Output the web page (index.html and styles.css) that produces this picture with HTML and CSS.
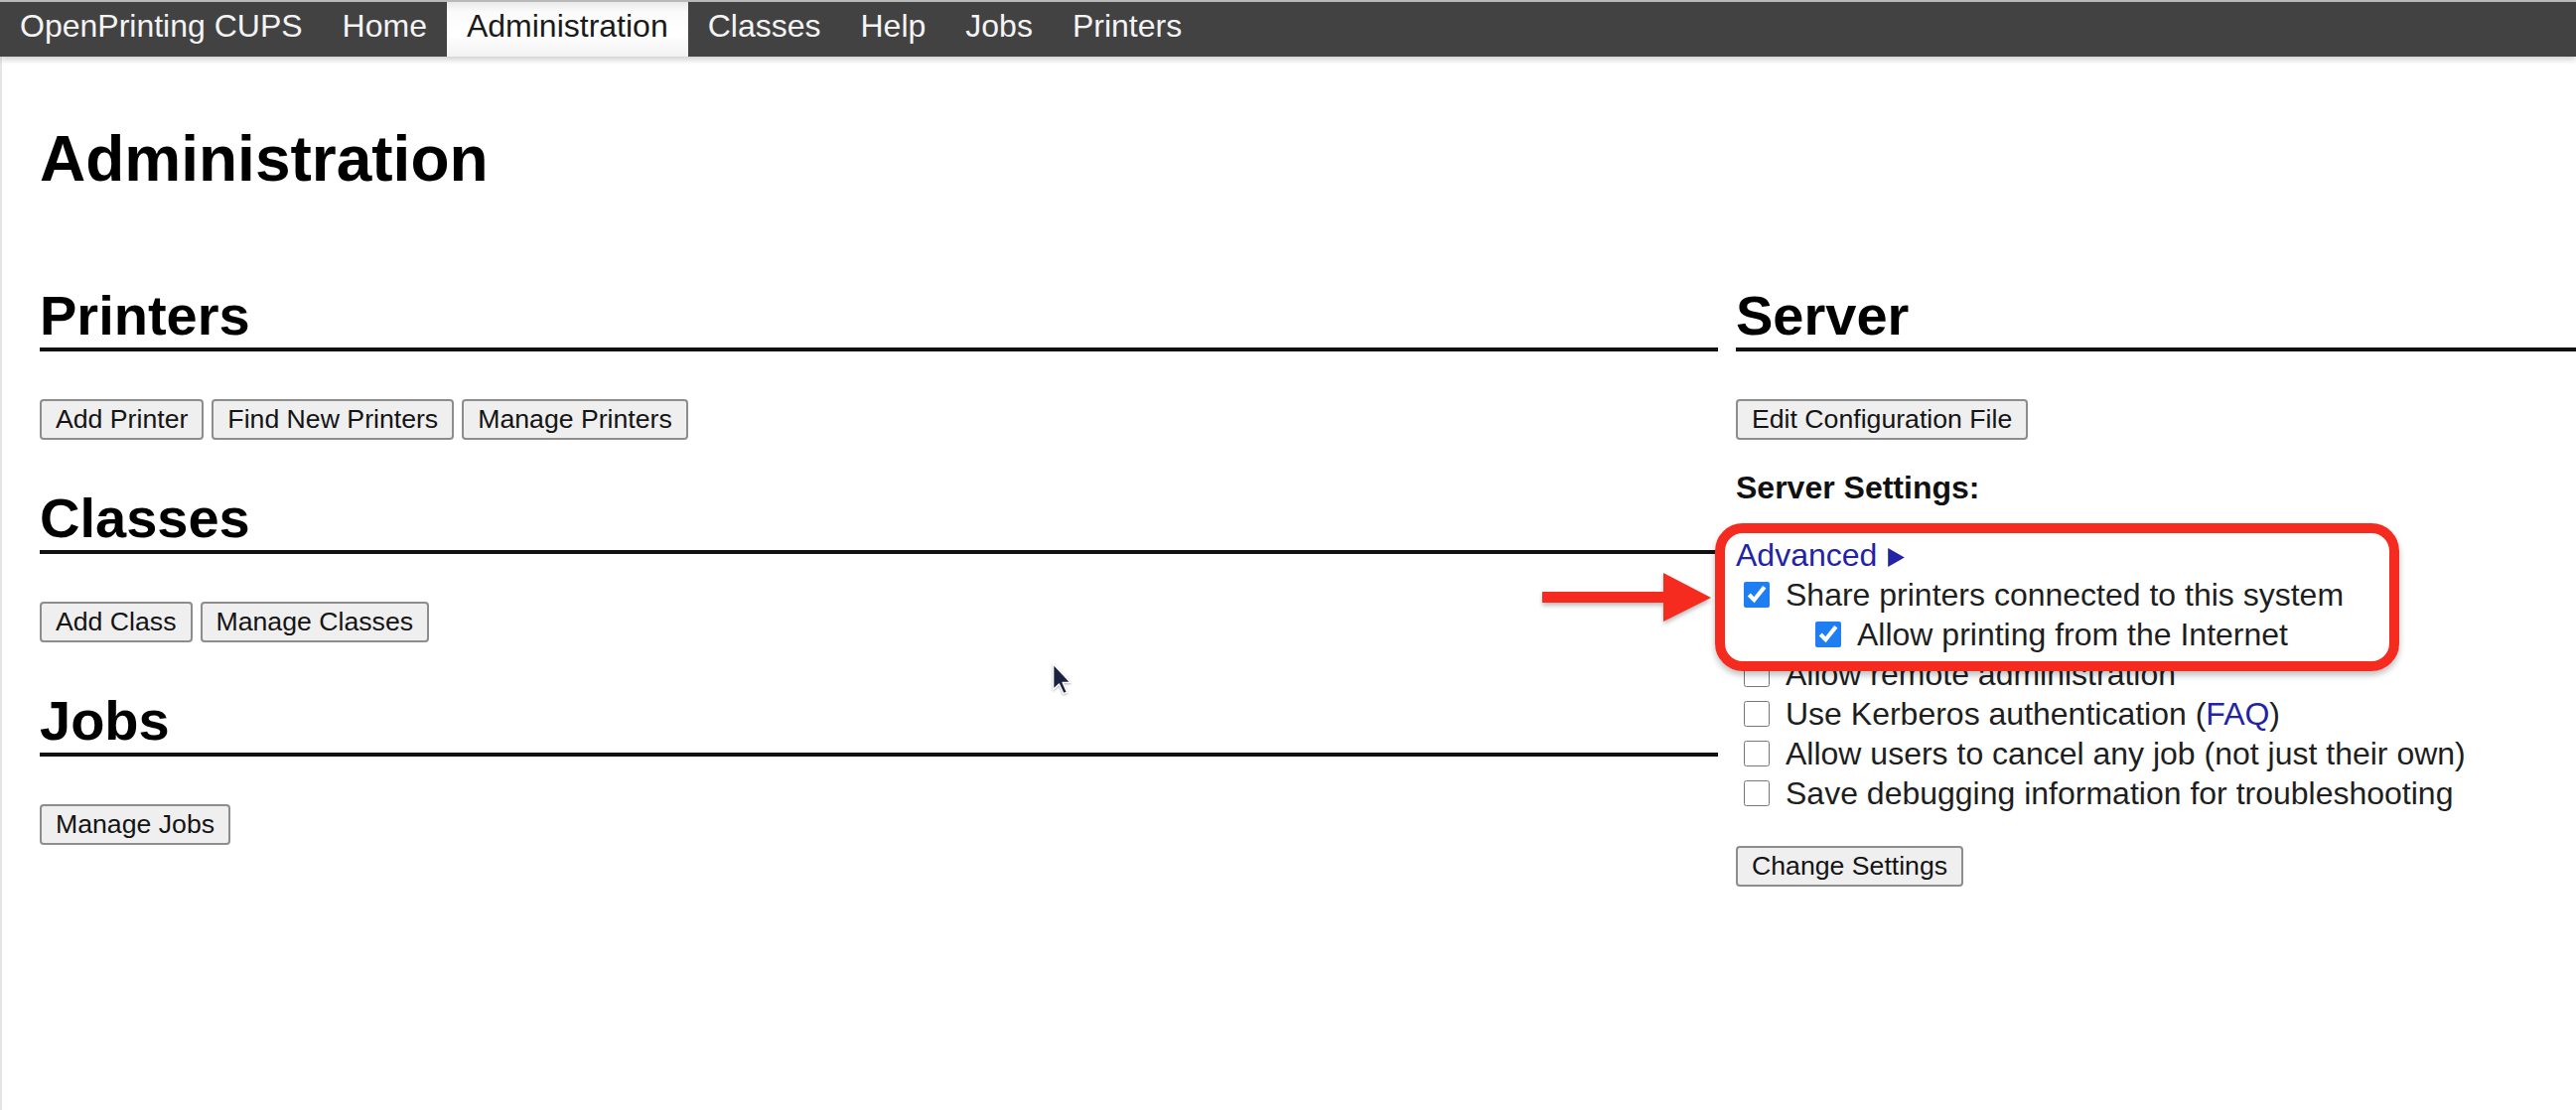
FILE: index.html
```html
<!DOCTYPE html>
<html lang="en">
<head>
<meta charset="utf-8">
<title>Administration - CUPS</title>
<link rel="stylesheet" href="styles.css">
</head>
<body>
<header class="nav">
  <a class="nav-item" href="#">OpenPrinting CUPS</a>
  <a class="nav-item" href="#">Home</a>
  <a class="nav-item active" href="#">Administration</a>
  <a class="nav-item" href="#">Classes</a>
  <a class="nav-item" href="#">Help</a>
  <a class="nav-item" href="#">Jobs</a>
  <a class="nav-item" href="#">Printers</a>
</header>

<main class="page">
  <h1 class="title">Administration</h1>
  <div class="cols">
    <div class="col">
      <section class="section">
        <h2 class="heading">Printers</h2>
        <div class="btn-row">
          <button class="btn">Add Printer</button>
          <button class="btn">Find New Printers</button>
          <button class="btn">Manage Printers</button>
        </div>
      </section>
      <section class="section">
        <h2 class="heading">Classes</h2>
        <div class="btn-row">
          <button class="btn">Add Class</button>
          <button class="btn">Manage Classes</button>
        </div>
      </section>
      <section class="section">
        <h2 class="heading">Jobs</h2>
        <div class="btn-row">
          <button class="btn">Manage Jobs</button>
        </div>
      </section>
    </div>

    <div class="col">
      <section class="section">
        <h2 class="heading">Server</h2>
        <div class="btn-row">
          <button class="btn">Edit Configuration File</button>
        </div>
        <p class="settings-title">Server Settings:</p>
        <div class="settings">
          <div class="adv-row"><a class="link" href="#">Advanced</a><svg class="tri" viewBox="0 0 16 16" width="16" height="16"><path d="M1 0 L15 8 L1 16 Z"/></svg></div>
          <label class="cb-row"><input type="checkbox" class="cb" checked><span class="cb-text">Share printers connected to this system</span></label>
          <label class="cb-row sub"><input type="checkbox" class="cb" checked><span class="cb-text">Allow printing from the Internet</span></label>
          <label class="cb-row"><input type="checkbox" class="cb"><span class="cb-text">Allow remote administration</span></label>
          <label class="cb-row"><input type="checkbox" class="cb"><span class="cb-text">Use Kerberos authentication (<a class="link" href="#">FAQ</a>)</span></label>
          <label class="cb-row"><input type="checkbox" class="cb"><span class="cb-text">Allow users to cancel any job (not just their own)</span></label>
          <label class="cb-row"><input type="checkbox" class="cb"><span class="cb-text">Save debugging information for troubleshooting</span></label>
        </div>
        <div class="btn-row submit-row">
          <button class="btn">Change Settings</button>
        </div>
      </section>
    </div>
  </div>
</main>

<div class="callout-box"></div>
<svg class="callout-arrow" viewBox="0 0 180 56" width="180" height="56">
  <rect x="3" y="22" width="123" height="11" fill="#f42b1e"/>
  <path d="M125 3 L125 52 L173 28 Z" fill="#f42b1e"/>
</svg>
<svg class="cursor" viewBox="0 0 13 21" width="21" height="34">
  <path d="M1 1 L1 17 L4.6 13.6 L7.4 19.6 L9.6 18.6 L6.9 12.6 L11.8 12.6 Z" fill="#1b2142" stroke="#ffffff" stroke-width="0.9" stroke-linejoin="round"/>
</svg>
</body>
</html>
```

FILE: styles.css
```css
html, body {
  margin: 0;
  padding: 0;
  background: #ffffff;
}

body {
  font-family: "Liberation Sans", Arial, sans-serif;
  font-size: 32px;
  color: #1e1e1e;
  overflow: hidden;
}

/* ---------- navigation bar ---------- */
.nav {
  display: flex;
  height: 55px;
  background: #424242;
  border-top: 2px solid #b9b9b9;
  box-shadow: 0 3px 6px rgba(0, 0, 0, 0.2);
  position: relative;
  z-index: 1;
}

.nav-item {
  display: block;
  padding: 0 20px 7px;
  line-height: 48px;
  font-size: 32px;
  color: #f4f4f4;
  text-decoration: none;
  white-space: nowrap;
}

.nav-item.active {
  color: #1a1a1a;
  background: linear-gradient(#e9e9e9 0%, #fbfbfb 18%, #ffffff 60%, #f2f2f2 100%);
}

/* ---------- page ---------- */
.page {
  border-left: 2px solid #e4e4e4;
  padding: 66px 0 0 38px;
  min-height: 995px;
}

.title {
  margin: 0 0 89px;
  font-size: 64px;
  line-height: 74px;
  font-weight: bold;
  color: #000;
}

.cols {
  display: grid;
  grid-template-columns: 1690px 1fr;
  column-gap: 18px;
}

.section {
  margin: 0;
}

.heading {
  margin: 0 0 48px;
  padding: 0;
  font-size: 56px;
  line-height: 64px;
  font-weight: bold;
  color: #000;
  border-bottom: 4px solid #111;
}

.btn-row {
  display: flex;
  gap: 8px;
  margin-bottom: 47px;
}

.btn {
  height: 41px;
  padding: 0 14px;
  font-family: "Liberation Sans", Arial, sans-serif;
  font-size: 26.67px;
  line-height: 37px;
  color: #141414;
  background: #efefef;
  border: 2px solid #8d8d8d;
  border-radius: 4px;
  white-space: nowrap;
}

/* ---------- server settings ---------- */
.settings-title {
  margin: -19px 0 0;
  font-weight: bold;
  line-height: 40px;
  color: #111;
}

.settings {
  margin-top: 28px;
  display: flex;
  flex-direction: column;
}

.adv-row {
  display: flex;
  align-items: center;
  height: 40px;
  line-height: 40px;
}

.link {
  color: #2323a6;
  text-decoration: none;
}

.tri {
  fill: #2323a6;
  margin-left: 10px;
  margin-top: 5px;
  width: 19px;
  height: 19px;
}

.cb-row {
  display: flex;
  align-items: center;
  height: 40px;
  line-height: 40px;
  white-space: nowrap;
}

.cb-row.sub {
  padding-left: 72px;
}

.cb {
  width: 26px;
  height: 26px;
  margin: 0 16px 0 8px;
  accent-color: #1f7ef2;
  flex: none;
}

.cb-text {
  color: #1e1e1e;
}

.submit-row {
  margin-top: 33px;
}

/* ---------- annotation overlays ---------- */
.callout-box {
  position: absolute;
  left: 1727px;
  top: 527px;
  width: 669px;
  height: 129px;
  border: 10px solid #f42b1e;
  border-radius: 28px;
  box-shadow: 0 4px 6px rgba(0, 0, 0, 0.25);
  pointer-events: none;
}

.callout-arrow {
  position: absolute;
  left: 1550px;
  top: 574px;
  filter: drop-shadow(0 3px 2px rgba(0, 0, 0, 0.25));
}

.cursor {
  position: absolute;
  left: 1059px;
  top: 667px;
  filter: drop-shadow(0 1px 1px rgba(0, 0, 0, 0.3));
}
```
